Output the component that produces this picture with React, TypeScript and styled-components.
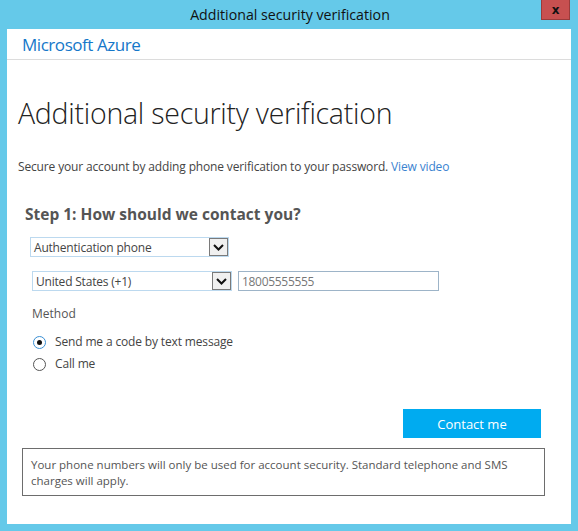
import React from "react";
import styled, { createGlobalStyle } from "styled-components";

const Global = createGlobalStyle`
  html, body { margin: 0; padding: 0; background: #65c9e9; }
  body { font-family: "Open Sans", "Noto Sans", sans-serif; }
  * { box-sizing: border-box; }
`;

const Window = styled.div`
  width: 578px;
  height: 531px;
  background: #65c9e9;
  display: flex;
  flex-direction: column;
`;

const TitleBar = styled.div`
  height: 29px;
  display: grid;
  grid-template-columns: 1fr auto 1fr;
  align-items: start;
`;

const TitleText = styled.div`
  grid-column: 2;
  font-size: 14.2px;
  line-height: 29px;
  color: #111;
  padding-left: 2px;
`;

const CloseButton = styled.div`
  grid-column: 3;
  justify-self: end;
  margin-right: 8px;
  width: 29px;
  height: 20px;
  background: #c75050;
  border: 1px solid #9a3b3b;
  border-top: none;
  display: flex;
  align-items: center;
  justify-content: center;
  color: #111;
  font-family: "DejaVu Sans", sans-serif;
  font-weight: bold;
  font-size: 12px;
`;

const Client = styled.div`
  flex: 1;
  margin: 0 7px 7px 7px;
  background: #fff;
  display: flex;
  flex-direction: column;
`;

const Header = styled.div`
  height: 31px;
  border-bottom: 1px solid #dcdcdc;
  padding-left: 15px;
  display: flex;
  align-items: center;
  font-size: 17px;
  color: #1577c9;
  letter-spacing: -0.45px;
`;

const Main = styled.div`
  padding: 0 11px;
  display: flex;
  flex-direction: column;
`;

const Heading = styled.h1`
  margin: 33px 0 0 0;
  font-size: 28.5px;
  font-weight: 300;
  color: #222;
  line-height: 40px;
  letter-spacing: -0.25px;
`;

const Lead = styled.p`
  margin: 26px 0 0 0;
  font-size: 12px;
  line-height: 16px;
  color: #444;
  letter-spacing: -0.15px;
`;

const Link = styled.a`
  color: #3a83d0;
  text-decoration: none;
`;

const StepTitle = styled.h2`
  margin: 29px 0 0 7px;
  font-size: 15.5px;
  font-weight: 700;
  color: #555;
  line-height: 20px;
`;

const Form = styled.div`
  padding-left: 12px;
  display: flex;
  flex-direction: column;
`;

const Row = styled.div<{ $top: number; $indent?: number }>`
  display: flex;
  gap: 6px;
  margin-top: ${(p) => p.$top}px;
  margin-left: ${(p) => p.$indent ?? 0}px;
`;

const Select = styled.div<{ $w: number }>`
  width: ${(p) => p.$w}px;
  height: 20px;
  border: 1px solid #bcd9ef;
  display: flex;
  align-items: center;
  justify-content: space-between;
  font-size: 12px;
  letter-spacing: -0.2px;
  color: #444;
  padding-left: 3px;
`;

const DropButton = styled.div`
  width: 19px;
  height: 18px;
  background: #f0f0f0;
  border: 1px solid #7a7a7a;
  display: flex;
  align-items: center;
  justify-content: center;
`;

const TextInput = styled.div`
  width: 201px;
  height: 20px;
  border: 1px solid #9db4c8;
  font-size: 12px;
  letter-spacing: -0.3px;
  color: #777;
  padding-left: 3px;
  display: flex;
  align-items: center;
`;

const Label = styled.div`
  margin: 15px 0 0 2px;
  font-size: 12px;
  color: #555;
  line-height: 16px;
`;

const RadioList = styled.div`
  margin-top: 12px;
  margin-left: 3px;
  display: flex;
  flex-direction: column;
  gap: 6px;
`;

const RadioRow = styled.div`
  display: flex;
  align-items: center;
  gap: 9px;
  font-size: 12px;
  letter-spacing: -0.15px;
  color: #444;
  line-height: 16px;
`;

const RadioCircle = styled.span<{ $checked?: boolean }>`
  width: 13px;
  height: 13px;
  border-radius: 50%;
  border: 1px solid ${(p) => (p.$checked ? "#3a8fd4" : "#555")};
  background: #fff;
  display: flex;
  align-items: center;
  justify-content: center;
  &::after {
    content: "";
    width: 5px;
    height: 5px;
    border-radius: 50%;
    background: ${(p) => (p.$checked ? "#111" : "transparent")};
  }
`;

const Actions = styled.div`
  margin-top: 37px;
  display: flex;
  justify-content: flex-end;
  padding-right: 19px;
`;

const PrimaryButton = styled.div`
  width: 138px;
  height: 29px;
  background: #00abf0;
  color: #fff;
  font-size: 13px;
  display: flex;
  align-items: center;
  justify-content: center;
`;

const Notice = styled.div`
  margin: 10px 15px 0 4px;
  border: 1px solid #6d6d6d;
  padding: 8px 8px 6px 8px;
  font-size: 11.5px;
  line-height: 16px;
  color: #555;
`;

const Chevron = () => (
  <svg width="11" height="7" viewBox="0 0 11 7">
    <path d="M1 1 L5.5 5.5 L10 1" fill="none" stroke="#111" strokeWidth="2" />
  </svg>
);

export default function App() {
  return (
    <Window>
      <Global />
      <TitleBar>
        <TitleText>Additional security verification</TitleText>
        <CloseButton>x</CloseButton>
      </TitleBar>
      <Client>
        <Header>Microsoft Azure</Header>
        <Main>
          <Heading>Additional security verification</Heading>
          <Lead>
            Secure your account by adding phone verification to your password.{" "}
            <Link href="#">View video</Link>
          </Lead>
          <StepTitle>Step 1: How should we contact you?</StepTitle>
          <Form>
            <Row $top={13}>
              <Select $w={199}>
                Authentication phone
                <DropButton>
                  <Chevron />
                </DropButton>
              </Select>
            </Row>
            <Row $top={14} $indent={2}>
              <Select $w={200}>
                United States (+1)
                <DropButton>
                  <Chevron />
                </DropButton>
              </Select>
              <TextInput>18005555555</TextInput>
            </Row>
            <Label>Method</Label>
            <RadioList>
              <RadioRow>
                <RadioCircle $checked />
                Send me a code by text message
              </RadioRow>
              <RadioRow>
                <RadioCircle />
                Call me
              </RadioRow>
            </RadioList>
          </Form>
          <Actions>
            <PrimaryButton>Contact me</PrimaryButton>
          </Actions>
          <Notice>
            Your phone numbers will only be used for account security. Standard telephone and SMS
            charges will apply.
          </Notice>
        </Main>
      </Client>
    </Window>
  );
}
